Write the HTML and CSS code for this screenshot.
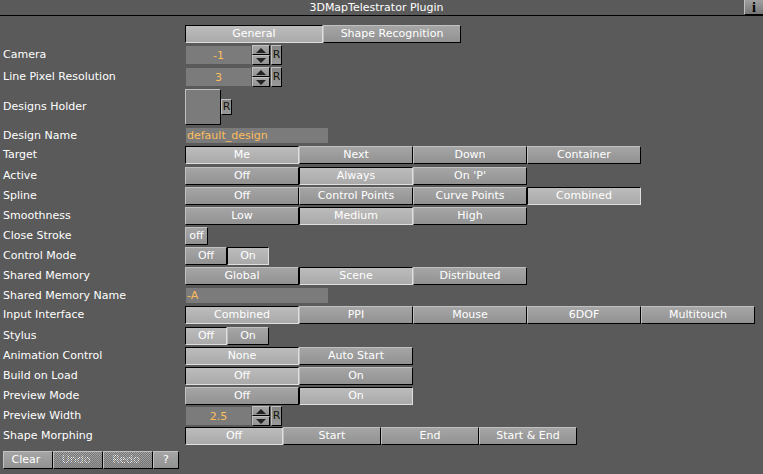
FILE: index.html
```html
<!DOCTYPE html>
<html lang="en">
<head>
<meta charset="utf-8">
<title>3DMapTelestrator Plugin</title>
<link rel="stylesheet" href="styles.css">
</head>
<body>
<header class="titlebar">
  <h1 class="title">3DMapTelestrator Plugin</h1>
  <button class="btn info" type="button" aria-label="Plugin information">i</button>
</header>
<main class="panel">
  <nav class="row">
    <div class="group tabs" role="group" aria-label="Pages">
      <button class="btn" type="button" aria-pressed="true">General</button>
      <button class="btn" type="button" aria-pressed="false">Shape Recognition</button>
    </div>
  </nav>
  <div class="row">
    <label class="label" for="camera">Camera</label>
    <div class="number">
      <input class="field" id="camera" type="text" inputmode="numeric" value="-1">
      <div class="stepper">
        <button class="btn" type="button" aria-label="Increase camera"><svg viewBox="0 0 10 5"><path d="M0 5 L5 0 L10 5Z"/></svg></button>
        <button class="btn" type="button" aria-label="Decrease camera"><svg viewBox="0 0 10 5"><path d="M0 0 H10 L5 5Z"/></svg></button>
      </div>
      <button class="btn reset" type="button" aria-label="Reset camera">R</button>
    </div>
  </div>
  <div class="row">
    <label class="label" for="resolution">Line Pixel Resolution</label>
    <div class="number">
      <input class="field" id="resolution" type="text" inputmode="numeric" value="3">
      <div class="stepper">
        <button class="btn" type="button" aria-label="Increase resolution"><svg viewBox="0 0 10 5"><path d="M0 5 L5 0 L10 5Z"/></svg></button>
        <button class="btn" type="button" aria-label="Decrease resolution"><svg viewBox="0 0 10 5"><path d="M0 0 H10 L5 5Z"/></svg></button>
      </div>
      <button class="btn reset" type="button" aria-label="Reset resolution">R</button>
    </div>
  </div>
  <div class="row">
    <label class="label" for="holder">Designs Holder</label>
    <div class="holder">
      <button class="slot" id="holder" type="button"></button>
      <button class="btn reset" type="button" aria-label="Reset designs holder">R</button>
    </div>
  </div>
  <div class="row row-text">
    <label class="label" for="design-name">Design Name</label>
    <input class="field text" id="design-name" type="text" value="default_design">
  </div>
  <div class="row row-spaced">
    <span class="label" id="target">Target</span>
    <div class="group" role="group" aria-labelledby="target">
      <button class="btn" type="button" aria-pressed="true">Me</button>
      <button class="btn" type="button" aria-pressed="false">Next</button>
      <button class="btn" type="button" aria-pressed="false">Down</button>
      <button class="btn" type="button" aria-pressed="false">Container</button>
    </div>
  </div>
  <div class="row">
    <span class="label" id="active">Active</span>
    <div class="group" role="group" aria-labelledby="active">
      <button class="btn" type="button" aria-pressed="false">Off</button>
      <button class="btn" type="button" aria-pressed="true">Always</button>
      <button class="btn" type="button" aria-pressed="false">On 'P'</button>
    </div>
  </div>
  <div class="row">
    <span class="label" id="spline">Spline</span>
    <div class="group" role="group" aria-labelledby="spline">
      <button class="btn" type="button" aria-pressed="false">Off</button>
      <button class="btn" type="button" aria-pressed="false">Control Points</button>
      <button class="btn" type="button" aria-pressed="false">Curve Points</button>
      <button class="btn" type="button" aria-pressed="true">Combined</button>
    </div>
  </div>
  <div class="row">
    <span class="label" id="smoothness">Smoothness</span>
    <div class="group" role="group" aria-labelledby="smoothness">
      <button class="btn" type="button" aria-pressed="false">Low</button>
      <button class="btn" type="button" aria-pressed="true">Medium</button>
      <button class="btn" type="button" aria-pressed="false">High</button>
    </div>
  </div>
  <div class="row">
    <label class="label" for="close-stroke">Close Stroke</label>
    <button class="btn toggle" id="close-stroke" type="button" aria-pressed="false">off</button>
  </div>
  <div class="row">
    <span class="label" id="control-mode">Control Mode</span>
    <div class="group switch" role="group" aria-labelledby="control-mode">
      <button class="btn" type="button" aria-pressed="false">Off</button>
      <button class="btn" type="button" aria-pressed="true">On</button>
    </div>
  </div>
  <div class="row">
    <span class="label" id="shared-memory">Shared Memory</span>
    <div class="group" role="group" aria-labelledby="shared-memory">
      <button class="btn" type="button" aria-pressed="false">Global</button>
      <button class="btn" type="button" aria-pressed="true">Scene</button>
      <button class="btn" type="button" aria-pressed="false">Distributed</button>
    </div>
  </div>
  <div class="row row-text">
    <label class="label" for="memory-name">Shared Memory Name</label>
    <input class="field text" id="memory-name" type="text" value="-A">
  </div>
  <div class="row row-spaced">
    <span class="label" id="input-interface">Input Interface</span>
    <div class="group" role="group" aria-labelledby="input-interface">
      <button class="btn" type="button" aria-pressed="true">Combined</button>
      <button class="btn" type="button" aria-pressed="false">PPI</button>
      <button class="btn" type="button" aria-pressed="false">Mouse</button>
      <button class="btn" type="button" aria-pressed="false">6DOF</button>
      <button class="btn" type="button" aria-pressed="false">Multitouch</button>
    </div>
  </div>
  <div class="row">
    <span class="label" id="stylus">Stylus</span>
    <div class="group switch" role="group" aria-labelledby="stylus">
      <button class="btn" type="button" aria-pressed="true">Off</button>
      <button class="btn" type="button" aria-pressed="false">On</button>
    </div>
  </div>
  <div class="row">
    <span class="label" id="animation">Animation Control</span>
    <div class="group" role="group" aria-labelledby="animation">
      <button class="btn" type="button" aria-pressed="true">None</button>
      <button class="btn" type="button" aria-pressed="false">Auto Start</button>
    </div>
  </div>
  <div class="row">
    <span class="label" id="build">Build on Load</span>
    <div class="group" role="group" aria-labelledby="build">
      <button class="btn" type="button" aria-pressed="true">Off</button>
      <button class="btn" type="button" aria-pressed="false">On</button>
    </div>
  </div>
  <div class="row">
    <span class="label" id="preview-mode">Preview Mode</span>
    <div class="group" role="group" aria-labelledby="preview-mode">
      <button class="btn" type="button" aria-pressed="false">Off</button>
      <button class="btn" type="button" aria-pressed="true">On</button>
    </div>
  </div>
  <div class="row row-tight">
    <label class="label" for="preview-width">Preview Width</label>
    <div class="number">
      <input class="field" id="preview-width" type="text" inputmode="decimal" value="2.5">
      <div class="stepper">
        <button class="btn" type="button" aria-label="Increase width"><svg viewBox="0 0 10 5"><path d="M0 5 L5 0 L10 5Z"/></svg></button>
        <button class="btn" type="button" aria-label="Decrease width"><svg viewBox="0 0 10 5"><path d="M0 0 H10 L5 5Z"/></svg></button>
      </div>
      <button class="btn reset" type="button" aria-label="Reset width">R</button>
    </div>
  </div>
  <div class="row">
    <span class="label" id="morphing">Shape Morphing</span>
    <div class="group morph" role="group" aria-labelledby="morphing">
      <button class="btn" type="button" aria-pressed="true">Off</button>
      <button class="btn" type="button" aria-pressed="false">Start</button>
      <button class="btn" type="button" aria-pressed="false">End</button>
      <button class="btn" type="button" aria-pressed="false">Start &amp; End</button>
    </div>
  </div>
</main>
<footer class="actions">
  <button class="btn" type="button">Clear</button>
  <button class="btn" type="button" disabled>Undo</button>
  <button class="btn" type="button" disabled>Redo</button>
  <button class="btn help" type="button" aria-label="Help">?</button>
</footer>
</body>
</html>
```
FILE: styles.css
```css
* {
  box-sizing: border-box;
}

body {
  margin: 0;
  background: #5a5a5a;
  color: #fff;
  font: 11px/14px "DejaVu Sans", Verdana, sans-serif;
}

button,
input {
  margin: 0;
  padding: 0;
  border: 0;
  border-radius: 0;
  font: inherit;
  color: inherit;
}

.titlebar {
  display: grid;
  grid-template-columns: 1fr auto 1fr;
  height: 16px;
  border-bottom: 1px solid #000;
}

.title {
  grid-column: 2;
  margin: 0;
  padding-right: 10px;
  font-size: 11px;
  font-weight: normal;
  line-height: 15px;
}

.panel {
  display: flex;
  flex-direction: column;
  gap: 2px;
  padding: 9px 3px 0;
}

.row {
  display: grid;
  grid-template-columns: 182px 1fr;
  align-items: center;
}

.row > :not(.label) {
  grid-column: 2;
}

.row-text {
  padding: 1px 0;
}

.row-spaced {
  padding-bottom: 1px;
}

.row-tight {
  grid-template-rows: 18px;
}

.label {
  white-space: nowrap;
}

.btn {
  height: 18px;
  border: 1px solid;
  border-color: #c0c0c0 #000 #000 #c0c0c0;
  background: linear-gradient(#a5a5a5, #929292);
  line-height: 16px;
  text-align: center;
  white-space: nowrap;
}

.btn[aria-pressed="true"] {
  border-color: #000 #dedede #dedede #000;
  background: linear-gradient(#bcbcbc, #aaa);
}

.group {
  display: flex;
}

.group .btn {
  flex: 0 1 114px;
}

.tabs .btn {
  flex-basis: 138px;
}

.switch .btn {
  flex-basis: 42px;
}

.morph .btn {
  flex-basis: 98px;
}

.toggle {
  width: 23px;
}

.field {
  width: 65px;
  height: 18px;
  margin: 0 1px;
  background: #7b7b7b;
  color: #fcbd5b;
  text-align: center;
}

.text {
  width: 142px;
  height: 15px;
  padding-left: 1px;
  text-align: left;
}

.number {
  display: flex;
  align-items: center;
}

.stepper {
  display: flex;
  flex-direction: column;
  margin-right: 1px;
}

.stepper .btn {
  display: flex;
  align-items: center;
  justify-content: center;
  width: 18px;
  height: 10px;
}

.stepper svg {
  width: 10px;
  height: 5px;
  fill: #222;
}

.reset {
  width: 11px;
  height: 20px;
  background: linear-gradient(#858585, #999);
  color: #141408;
}

.holder {
  display: flex;
  align-items: center;
}

.holder .reset {
  height: 16px;
  line-height: 14px;
}

.slot {
  width: 36px;
  height: 36px;
  border: 1px solid;
  border-color: #c0c0c0 #000 #000 #c0c0c0;
  background: #7b7b7b;
}

.info {
  grid-column: 3;
  justify-self: end;
  width: 19px;
  height: 15px;
  border-width: 0 0 1px 1px;
  background: linear-gradient(#a0a0a0, #777);
  color: #000;
  font: bold 14px/13px "Liberation Serif", serif;
}

.actions {
  display: flex;
  padding: 6px 3px;
}

.actions .btn {
  width: 50px;
  padding-right: 4px;
}

.actions .help {
  width: 26px;
  padding: 0;
}

.actions .btn:disabled {
  position: relative;
  color: #fff;
}

/* Checkerboard veil over unavailable actions */
.actions .btn:disabled::after {
  content: "";
  position: absolute;
  inset: 0;
  background: repeating-conic-gradient(#777 0 25%, transparent 0 50%) 0 0 / 2px 2px;
}
```
